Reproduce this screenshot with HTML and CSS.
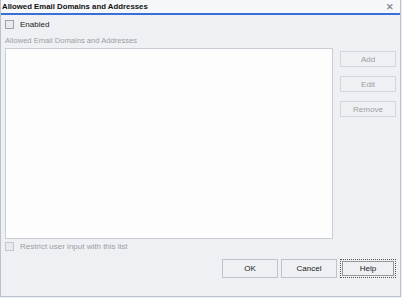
FILE: index.html
```html
<!DOCTYPE html>
<html lang="en">
<head>
  <meta charset="UTF-8" />
  <title>Allowed Email Domains and Addresses</title>
  <link rel="stylesheet" href="styles.css">
</head>
<body>

<div class="dialog">
  <div class="titlebar">
    <span class="title">Allowed Email Domains and Addresses</span>
    <span class="close">&#x2715;</span>
  </div>

  <div class="content">
    <label class="check">
      <span class="box"></span>
      <span>Enabled</span>
    </label>

    <div class="caption">Allowed Email Domains and Addresses</div>

    <div class="list-row">
      <div class="listbox"></div>
      <div class="side-buttons">
        <button class="btn">Add</button>
        <button class="btn">Edit</button>
        <button class="btn">Remove</button>
      </div>
    </div>

    <label class="check disabled">
      <span class="box"></span>
      <span>Restrict user input with this list</span>
    </label>

    <div class="footer">
      <button class="btn active">OK</button>
      <button class="btn active">Cancel</button>
      <button class="btn active default">Help</button>
    </div>
  </div>
</div>

</body>
</html>
```

FILE: styles.css
```css
* {
  box-sizing: border-box;
  margin: 0;
  padding: 0;
}

body {
  width: 402px;
  height: 298px;
  background: #eef0f3;
  font-family: "Liberation Sans", Arial, sans-serif;
  font-size: 8px;
  color: #222;
  overflow: hidden;
}

.dialog {
  width: 401px;
  height: 297px;
  border: 1px solid #b9c2cc;
  border-top: none;
  background: #eef0f3;
}

.titlebar {
  height: 15px;
  display: flex;
  align-items: center;
  justify-content: space-between;
  padding: 0 6px 0 1px;
  background: #f6f7f9;
  border-bottom: 2px solid #3a6fd6;
}

.title {
  font-size: 7.8px;
  font-weight: bold;
  color: #111;
}

.close {
  font-size: 9px;
  font-weight: bold;
  color: #8a8d91;
}

.content {
  padding: 4px 4px 0 4px;
}

.check {
  display: flex;
  align-items: center;
  gap: 6px;
  height: 11px;
  font-size: 8px;
}

.check .box {
  width: 9px;
  height: 9px;
  border: 1px solid #9aa3ac;
  background: #e8eaee;
}

.check.disabled {
  color: #9a9ea4;
}

.check.disabled .box {
  border-color: #c3c8ce;
}

.caption {
  margin-top: 6px;
  color: #9a9ea4;
  font-size: 7.6px;
}

.list-row {
  display: flex;
  gap: 7px;
  margin-top: 3px;
}

.listbox {
  width: 328px;
  height: 191px;
  background: #fdfdfd;
  border: 1px solid #c9ced4;
}

.side-buttons {
  display: flex;
  flex-direction: column;
  gap: 9px;
  padding-top: 3px;
}

.btn {
  width: 56px;
  height: 16px;
  border: 1px solid #d2d5da;
  background: #eef0f3;
  color: #9a9ea4;
  font-family: inherit;
  font-size: 8px;
}

.content > .check.disabled {
  margin-top: 2px;
}

.footer {
  display: flex;
  justify-content: flex-end;
  gap: 3px;
  margin-top: 7px;
  padding-right: 0;
}

.btn.active {
  height: 19px;
  color: #222;
  border-color: #bfc4ca;
}

.btn.default {
  border: 1px dotted #555;
  outline: 1px solid #999;
  outline-offset: -3px;
}
```
